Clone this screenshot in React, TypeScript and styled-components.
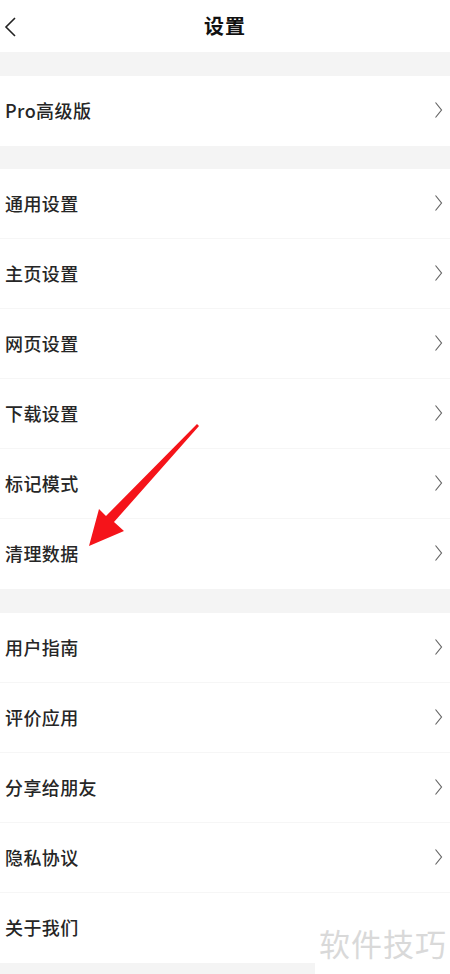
import * as React from "react";
import styled, { createGlobalStyle } from "styled-components";

const GlobalStyle = createGlobalStyle`
  html, body {
    margin: 0;
    padding: 0;
    background: #f4f4f4;
  }
  body {
    font-family: "Noto Sans CJK SC", "Noto Sans", sans-serif;
    color: #222;
  }
`;

const Page = styled.div`
  position: relative;
  width: 450px;
  height: 974px;
  overflow: hidden;
  background: #f4f4f4;
`;

const Header = styled.div`
  height: 52px;
  background: #fff;
  display: flex;
  align-items: center;
  justify-content: center;
  position: relative;
`;

const BackButton = styled.div`
  position: absolute;
  left: 3px;
  top: 15px;
  width: 16px;
  height: 24px;
  display: flex;
`;

const Title = styled.h1`
  margin: 0 0 2px;
  font-size: 20px;
  font-weight: 700;
  color: #111;
  letter-spacing: 1px;
`;

const Section = styled.div<{ $gap: number }>`
  margin-top: ${(p) => p.$gap}px;
  background: #fff;
`;

const Row = styled.div<{ $last?: boolean }>`
  height: 70px;
  box-sizing: border-box;
  display: flex;
  align-items: center;
  justify-content: space-between;
  padding: 0 7px 2px 5px;
  border-bottom: ${(p) => (p.$last ? "none" : "1px solid #f6f6f6")};
`;

const Label = styled.span`
  font-size: 18px;
  font-weight: 500;
  color: #262626;
  letter-spacing: 0.4px;
`;

const Watermark = styled.div`
  position: absolute;
  right: 0;
  bottom: 0;
  width: 135px;
  height: 60px;
  background: #fff;
  display: flex;
  align-items: center;
  padding-left: 4px;
  box-sizing: border-box;
  font-size: 31px;
  color: #d9d9d9;
  letter-spacing: 1px;
  padding-bottom: 4px;
`;

const Arrow = styled.svg`
  position: absolute;
  left: 0;
  top: 0;
  pointer-events: none;
`;

const Chevron = ({ dir }: { dir: "left" | "right" }) =>
  dir === "left" ? (
    <svg width="16" height="24" viewBox="0 0 16 24">
      <path d="M12 3 L3 12 L12 21" fill="none" stroke="#222" strokeWidth="1.6" />
    </svg>
  ) : (
    <svg width="9" height="18" viewBox="0 0 9 18">
      <path d="M1.5 1.5 L7.5 9 L1.5 16.5" fill="none" stroke="#666" strokeWidth="1.2" />
    </svg>
  );

const sections: { gap: number; items: string[] }[] = [
  { gap: 24, items: ["Pro高级版"] },
  { gap: 23, items: ["通用设置", "主页设置", "网页设置", "下载设置", "标记模式", "清理数据"] },
  { gap: 24, items: ["用户指南", "评价应用", "分享给朋友", "隐私协议", "关于我们"] },
];

const App: React.FC = () => {
  return (
    <Page>
      <GlobalStyle />
      <Header>
        <BackButton>
          <Chevron dir="left" />
        </BackButton>
        <Title>设置</Title>
      </Header>
      {sections.map((s, si) => (
        <Section key={si} $gap={s.gap}>
          {s.items.map((item, i) => (
            <Row key={item} $last={i === s.items.length - 1}>
              <Label>{item}</Label>
              {item !== "关于我们" && <Chevron dir="right" />}
            </Row>
          ))}
        </Section>
      ))}
      <Arrow width="450" height="974" viewBox="0 0 450 974">
        <polygon
          points="197,424 199,426 114,522 124,531 89,546 99,509 106,516"
          fill="#f5141a"
        />
      </Arrow>
      <Watermark>软件技巧</Watermark>
    </Page>
  );
};

export default App;
